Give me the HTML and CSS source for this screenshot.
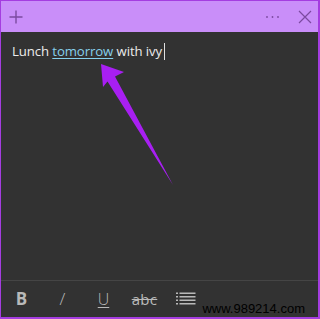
FILE: index.html
```html
<!DOCTYPE html>
<html>
<head>
<meta charset="utf-8">
<link rel="stylesheet" href="styles.css">
</head>
<body>
<div class="window">
  <div class="titlebar">
    <button class="tb-btn add" aria-label="New note">
      <svg width="16" height="16" viewBox="0 0 16 16"><path d="M8 1.5V14.5M1.5 8H14.5" stroke="#7b4aa0" stroke-width="1.4" fill="none"/></svg>
    </button>
    <div class="spacer"></div>
    <button class="tb-btn more" aria-label="Menu">
      <svg width="16" height="4" viewBox="0 0 16 4"><circle cx="2" cy="2" r="0.9" fill="#7b4aa0"/><circle cx="7.5" cy="2" r="0.9" fill="#7b4aa0"/><circle cx="13" cy="2" r="0.9" fill="#7b4aa0"/></svg>
    </button>
    <button class="tb-btn close" aria-label="Close">
      <svg width="14" height="14" viewBox="0 0 14 14"><path d="M1 1L13 13M13 1L1 13" stroke="#7b4aa0" stroke-width="1.2" fill="none"/></svg>
    </button>
  </div>
  <div class="content">
    <p class="note">Lunch <span class="link">tomorrow</span> with ivy<span class="caret"></span></p>
    <svg class="arrow" width="320" height="319" viewBox="0 0 320 319"><polygon points="100,63 123,71 114,75.5 172,184 106.5,80.5 102,86" fill="#a81ff2"/></svg>
  </div>
  <div class="toolbar">
    <button class="fmt bold">B</button>
    <button class="fmt italic">/</button>
    <button class="fmt under"><span>U</span></button>
    <button class="fmt strike">abc</button>
    <button class="fmt list">
      <svg width="20" height="14" viewBox="0 0 20 14"><g fill="#b9b9b9"><rect x="0" y="0.5" width="2" height="1.5"/><rect x="3.5" y="0.5" width="16" height="1.5"/><rect x="0" y="4" width="2" height="1.5"/><rect x="3.5" y="4" width="16" height="1.5"/><rect x="0" y="7.5" width="2" height="1.5"/><rect x="3.5" y="7.5" width="16" height="1.5"/><rect x="0" y="11" width="2" height="1.5"/><rect x="3.5" y="11" width="16" height="1.5"/></g></svg>
    </button>
  </div>
  <div class="watermark">www.989214.com</div>
</div>
</body>
</html>
```
FILE: styles.css
```css
* { box-sizing: border-box; }
html, body { margin: 0; padding: 0; background: #323232; }
.window {
  position: relative;
  width: 320px;
  height: 319px;
  border-top: 1px solid #a43de0;
  border-left: 1px solid #a43de0;
  border-right: 2px solid #a43de0;
  border-bottom: 2px solid #a43de0;
  background: #323232;
  display: flex;
  flex-direction: column;
  font-family: "Open Sans", "Noto Sans", sans-serif;
}
.titlebar {
  height: 31px;
  background: #c98ef9;
  display: flex;
  align-items: center;
  padding: 0 6px 0 7px;
}
.spacer { flex: 1; }
.tb-btn {
  background: none;
  border: 0;
  padding: 0;
  display: flex;
  align-items: center;
  justify-content: center;
}
.add { width: 16px; height: 16px; }
.more { width: 16px; height: 16px; margin-right: 17px; }
.close { width: 14px; height: 14px; }
.content {
  flex: 1;
  padding: 9px 10px 0 11px;
}
.note {
  margin: 0;
  color: #ececec;
  font-size: 13.2px;
  letter-spacing: -0.1px;
  line-height: 20px;
}
.link {
  color: #86d0ec;
  text-decoration: underline;
  text-underline-offset: 2px;
}
.caret {
  display: inline-block;
  width: 1px;
  height: 17px;
  background: #e0e0e0;
  vertical-align: -4px;
  margin-left: 2px;
}
.arrow {
  position: absolute;
  left: 0;
  top: 0;
  pointer-events: none;
}
.toolbar {
  height: 37px;
  border-top: 1px solid #454545;
  display: flex;
  align-items: center;
  padding-bottom: 1px;
}
.fmt {
  width: 41px;
  height: 24px;
  background: none;
  border: 0;
  padding: 0;
  color: #b9b9b9;
  font-family: "Open Sans", "Noto Sans", sans-serif;
  display: flex;
  align-items: center;
  justify-content: center;
}
.bold { font-weight: 700; font-size: 17px; }
.italic { font-size: 17px; font-weight: 300; }
.under span {
  font-size: 16px;
  font-weight: 300;
  text-decoration: underline;
  text-decoration-thickness: 1px;
  text-underline-offset: 2px;
}
.strike { font-size: 15px; letter-spacing: 0.3px; text-decoration: line-through; text-decoration-thickness: 1px; }
.watermark {
  position: absolute;
  right: 13px;
  bottom: 1px;
  font-family: "Liberation Sans", Arial, sans-serif;
  font-size: 13px;
  color: #000;
}
```
